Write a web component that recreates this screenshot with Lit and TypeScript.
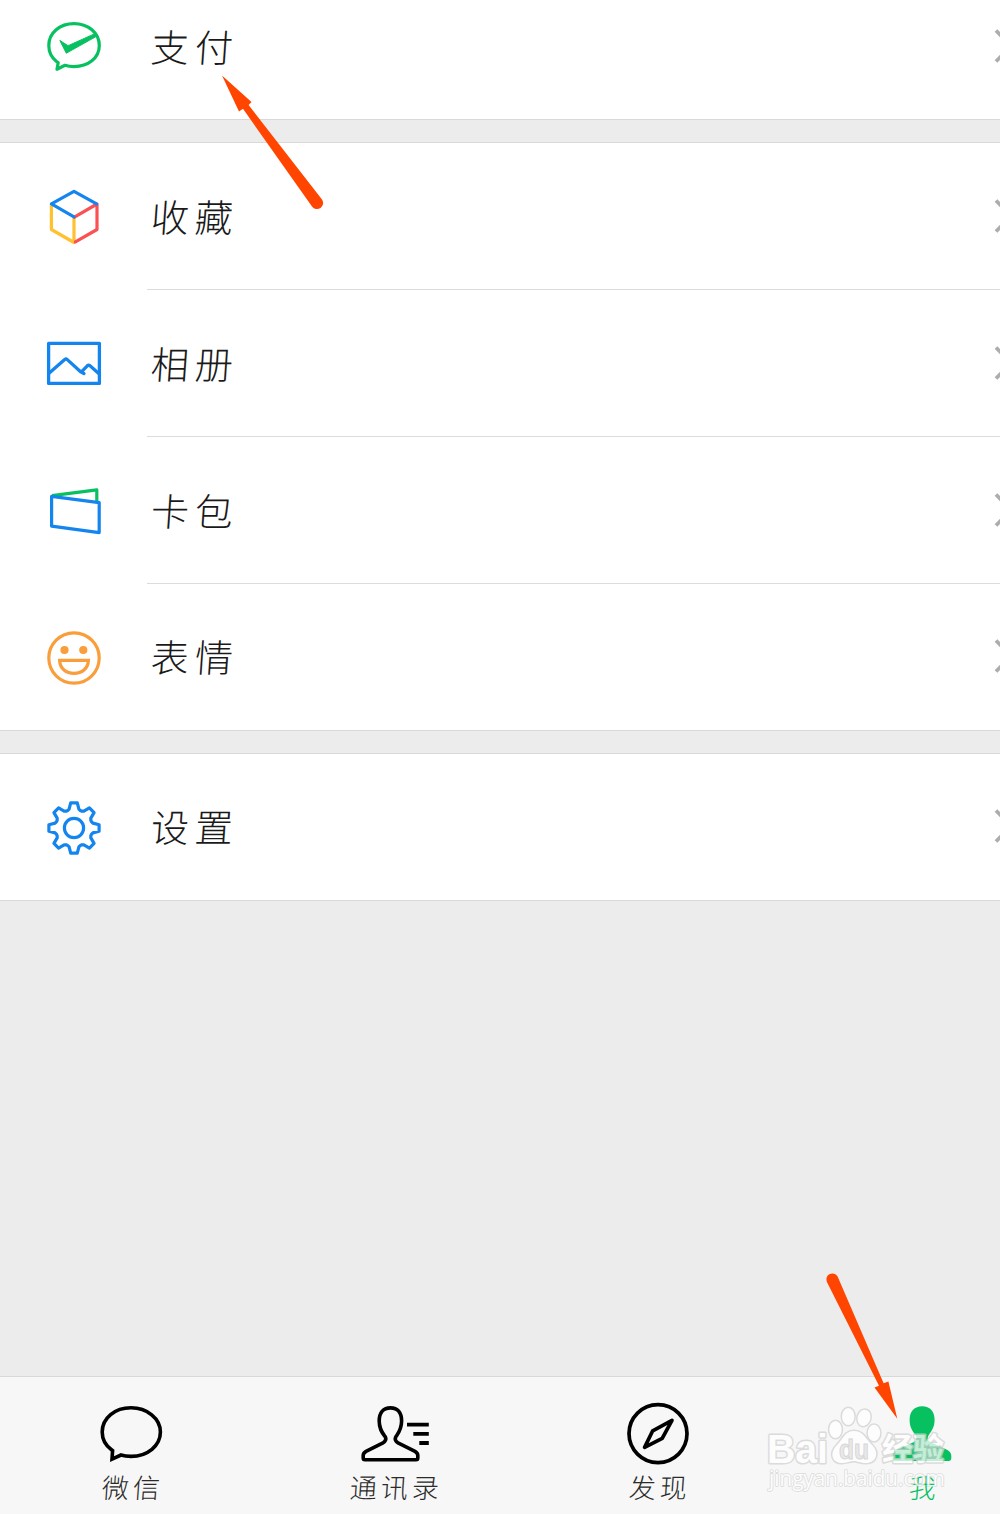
import { LitElement, html, svg, css, nothing } from "lit";
import { customElement, property } from "lit/decorators.js";

const gearPoints = Array.from({ length: 8 }, (_, i) => {
  const a = (i * Math.PI) / 4;
  return [[-6.4, -17.4], [-4.9, -18.9], [-3.3, -25.1], [3.3, -25.1], [4.9, -18.9], [6.4, -17.4]]
    .map(([x, y]) => `${(28 + x * Math.cos(a) - y * Math.sin(a)).toFixed(2)},${(29 + x * Math.sin(a) + y * Math.cos(a)).toFixed(2)}`)
    .join(" ");
}).join(" ");

const rowIcons: Record<string, unknown> = {
  pay: svg`<g fill="none" stroke="#07c160" stroke-width="3.2" stroke-linejoin="round">
    <path d="M10.5 43.5C5.5 39.5 2.8 34 2.8 27.5C2.8 14.6 14 5.6 28 5.6S53.3 14.8 53.3 27.5S42 48.6 28 48.6C24.6 48.6 21.8 48.2 19 47.3L11 51.2L12.2 44.6Z"/></g>
    <path fill="#07c160" stroke="#07c160" stroke-width="1" stroke-linejoin="round" d="M13.8 22.4L21.2 27.2Q22 27.7 23.2 27.2L49.5 15.4L51.8 17.6L20.3 35.2Z"/>`,
  box: svg`<g fill="none" stroke-width="3.2" stroke-linejoin="round" stroke-linecap="round" transform="translate(0 .5)">
    <path stroke="#ffc12f" d="M5.4 16V41L28 54V28.8"/>
    <path stroke="#fa5155" d="M29.4 53.4L51 41V15.5L28.4 28.6"/>
    <path stroke="#1485ee" d="M28 28.4L5.4 15.4L28 2.8L50.6 15.4"/></g>`,
  album: svg`<g fill="none" stroke="#1485ee" stroke-width="3.3" stroke-linejoin="round" transform="translate(0 .8)">
    <rect x="2.6" y="7.6" width="50.8" height="40"/>
    <path d="M3 37.5L18.7 23.8Q20 22.6 21.3 23.8L34.6 36L38 37.8L35.4 36L41.3 30Q42.6 28.8 44 30L53 38"/></g>`,
  card: svg`<g fill="none" stroke-width="3.2" stroke-linejoin="round" transform="translate(0 4.2)">
    <path stroke="#07c160" d="M6 9.4L50.8 3.6V15"/>
    <path stroke="#1485ee" d="M5.6 10.2L53.2 16.4V46.4L5.6 40Z"/></g>`,
  smile: svg`<g fill="none" stroke="#fa9d3b" stroke-width="3.2">
    <circle cx="28" cy="29" r="25.2"/>
    <path d="M13.6 31.3H42.4C42 39.6 35.8 44.4 28 44.4S14 39.6 13.6 31.3Z"/></g>
    <circle cx="18.5" cy="21" r="4.1" fill="#fa9d3b"/><circle cx="37.3" cy="21" r="4.1" fill="#fa9d3b"/>`,
  gear: svg`<g fill="none" stroke="#1485ee" stroke-width="3.2" stroke-linejoin="round">
    <polygon points=${gearPoints}/><circle cx="28" cy="29" r="9.6"/></g>`,
};

const tabIcons: Record<string, unknown> = {
  chat: svg`<path fill="none" stroke="#000" stroke-width="3.6" d="M13.5 46.8C7.6 42.4 4.2 36.2 4.2 29C4.2 15 17 4.8 33 4.8S62.4 15.4 62.4 29S49.6 53.4 33 53.4C29.2 53.4 26 53 23 52L14 56.2L14.6 47.6Z"/>`,
  contacts: svg`<path fill="none" stroke="#000" stroke-width="3.6" stroke-linejoin="round" d="M3 56.8Q1.2 56.8 1.2 55V52.6Q1.2 50 4 48.4L20.5 40.2Q24.8 37.6 23.5 34.2C20.5 30 17.2 26.5 17.2 18C17.2 9.5 21.5 4.9 28.5 4.9S39.6 9.5 39.6 18C39.6 26.5 36.4 30 33.6 34.2Q32.2 37.6 36.5 40.2L53 48.4Q55.8 50 55.8 52.6V55Q55.8 56.8 54 56.8Z"/>
    <path d="M45 21.7H66.8M51.3 30.8H66.8M57.3 40H66.8" stroke="#000" stroke-width="3.8"/>`,
  compass: svg`<g fill="none" stroke="#000" stroke-width="3.7" stroke-linejoin="round"><circle cx="33" cy="30.6" r="29"/>
    <path d="M47 17.4L27.7 27.8L19.6 44.4L37.2 35.4Z"/></g>`,
  me: svg`<path fill="#07c160" d="M6 58Q3.6 58 3.6 55V53Q3.6 49 7.8 46.8L25 39C28 37.4 28 34.6 26.4 32C23 27.6 20.6 23.5 20.6 17C20.6 8 25.6 3.2 33.2 3.2S45.6 8 45.6 17C45.6 23.5 43 27.6 39.8 32C38.2 34.6 38.2 37.4 41.2 39L58 46.8Q62.3 49 62.3 53V55Q62.3 58 59.6 58Z"/>`,
};

@customElement("menu-row")
class MenuRow extends LitElement {
  @property() icon = "";
  @property() label = "";
  @property({ type: Boolean }) divided = false;

  static styles = css`
    :host { display: flex; height: 147px; box-sizing: border-box; align-items: center; padding-left: 46px; background: #fff; }
    .icon { width: 56px; height: 56px; flex: none; overflow: visible; }
    .body { flex: 1; align-self: stretch; margin-left: 45px; display: flex; align-items: center; justify-content: space-between; padding: 0 39px 0 4px; box-sizing: border-box; border-bottom: 1px solid transparent; }
    .divided { border-color: #dcdcdc; }
    .label { font: 300 38px/50px "Noto Sans CJK SC", sans-serif; letter-spacing: 6px; color: #1a1a1a; transform: skewX(-4deg); }
    .chevron { width: 20px; height: 36px; flex: none; }
  `;

  render() {
    return html`
      <svg class="icon" viewBox="0 0 56 56">${rowIcons[this.icon] ?? nothing}</svg>
      <div class="body ${this.divided ? "divided" : ""}">
        <span class="label">${this.label}</span>
        <svg class="chevron" viewBox="0 0 20 36"><path d="M2 2.5L17 18L2 33.5" fill="none" stroke="#adadad" stroke-width="3.8"/></svg>
      </div>`;
  }
}

@customElement("tab-item")
class TabItem extends LitElement {
  @property() icon = "";
  @property() label = "";
  @property({ type: Boolean }) active = false;

  static styles = css`
    :host { flex: 1; display: flex; flex-direction: column; align-items: center; padding-top: 26px; }
    .icon { width: 66px; height: 62px; overflow: visible; }
    .label { font: 300 27px/36px "Noto Sans CJK SC", sans-serif; letter-spacing: 4px; margin: 4px -4px 0 0; color: #2b2b2b; transform: skewX(-4deg); }
    .active { color: #07c160; }
  `;

  render() {
    return html`
      <svg class="icon" viewBox="0 0 66 62">${tabIcons[this.icon] ?? nothing}</svg>
      <span class="label ${this.active ? "active" : ""}">${this.label}</span>`;
  }
}

@customElement("app-root")
class AppRoot extends LitElement {
  static styles = css`
    :host { display: block; position: relative; width: 1000px; height: 1514px; overflow: hidden; background: #ececec; }
    .screen { display: flex; flex-direction: column; width: 1053px; height: 1514px; }
    .group { background: #fff; border-top: 1px solid #d9d9d9; border-bottom: 1px solid #d9d9d9; margin-bottom: 22px; display: flex; flex-direction: column; }
    .group:first-child { border-top: 0; margin-bottom: 21.5px; }
    .top { height: 119px; padding-bottom: 27px; }
    .last { height: 146px; }
    .tabs { display: flex; height: 138px; margin: auto -1px 0 -1px; background: #f7f7f7; border-top: 1px solid #d9d9d9; box-sizing: border-box; }
    .overlay { position: absolute; left: 0; top: 0; width: 1000px; height: 1514px; pointer-events: none; }
    .mark { fill: #fff; stroke: #d2d2d2; stroke-width: 3px; paint-order: stroke; stroke-linejoin: round; }
    .brand { font: 700 40px "Liberation Sans", sans-serif; }
    .du { font: 700 27px "Liberation Sans", sans-serif; fill: #e4e4e4; stroke: #cccccc; stroke-width: 1px; }
    .cn { font: 700 31px "Noto Sans CJK SC", sans-serif; }
    .url { font: 400 21px "Open Sans", sans-serif; stroke-width: 1.6px; }
    .arrow { fill: #ff4500; }
  `;

  render() {
    return html`
      <div class="screen">
        <div class="group"><menu-row class="top" icon="pay" label="支付"></menu-row></div>
        <div class="group">
          <menu-row icon="box" label="收藏" divided></menu-row>
          <menu-row icon="album" label="相册" divided></menu-row>
          <menu-row icon="card" label="卡包" divided></menu-row>
          <menu-row class="last" icon="smile" label="表情"></menu-row>
        </div>
        <div class="group"><menu-row class="last" icon="gear" label="设置"></menu-row></div>
        <div class="tabs">
          <tab-item icon="chat" label="微信"></tab-item>
          <tab-item icon="contacts" label="通讯录"></tab-item>
          <tab-item icon="compass" label="发现"></tab-item>
          <tab-item icon="me" label="我" active></tab-item>
        </div>
      </div>
      <svg class="overlay" viewBox="0 0 1000 1514">
        <g opacity="0.75">
          <g class="mark">
            <ellipse cx="835.5" cy="1429.5" rx="6.2" ry="8.6"/>
            <ellipse cx="848.2" cy="1416.5" rx="6.2" ry="8.6"/>
            <ellipse cx="864" cy="1417.8" rx="6.4" ry="8.2" transform="rotate(15 864 1417.8)"/>
            <ellipse cx="874" cy="1433" rx="6.2" ry="8.2"/>
            <path d="M854 1431C863 1431 866 1439 872 1445C880 1453 876 1463 866 1463C860 1463 857 1461 854 1461S846 1463 842 1463C832 1463 829 1453 837 1445C843 1439 845 1431 854 1431Z"/>
          </g>
          <text class="mark brand" x="767" y="1463" textLength="61" lengthAdjust="spacingAndGlyphs">Bai</text>
          <text class="du" x="839" y="1459" textLength="30" lengthAdjust="spacingAndGlyphs">du</text>
          <text class="mark cn" x="882" y="1460">经验</text>
          <text class="mark url" x="769" y="1486" textLength="176" lengthAdjust="spacingAndGlyphs">jingyan.baidu.com</text>
        </g>
        <g class="arrow">
          <path d="M222 75.5L251.5 102L248.6 105L322 199.5A6 6 0 0 1 312 206.5L243 108.8L239 111.5Z"/>
          <path d="M897.3 1418.8L874.5 1387.5L879 1385.8L826.8 1281.8A6 6 0 0 1 837.6 1276.6L883.6 1383.2L888.4 1381.6Z"/>
        </g>
      </svg>`;
  }
}
